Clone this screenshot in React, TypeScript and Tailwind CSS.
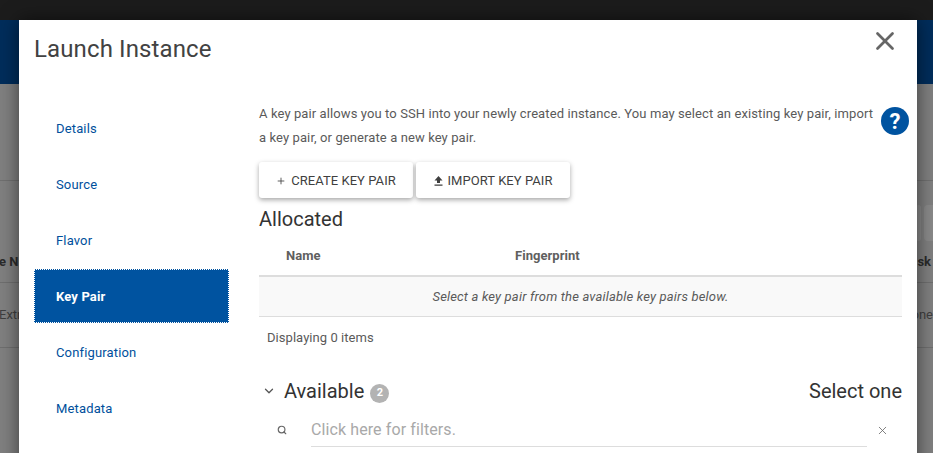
import React from "react";
import { X, Search, ChevronDown, Plus } from "lucide-react";

const nav = ["Details", "Source", "Flavor", "Key Pair", "Configuration", "Metadata"];

export default function App() {
  return (
    <div className="relative h-[453px] w-[933px] overflow-hidden bg-[#808080] text-[13px] font-['Roboto',sans-serif]">
      {/* Page behind the dimmed backdrop */}
      <div className="h-5 bg-[#1c1c1c]" />
      <div className="h-16 bg-[#012d5b]" />
      <div className="flex h-[369px] flex-col">
        <div className="h-[97px] border-b border-[#707070]" />
        <div className="flex h-[60px] justify-end gap-[3px] pt-[24px]">
          <div className="h-[36px] w-[5px] rounded-sm bg-[#8a8a8a]" />
          <div className="h-[36px] w-[9px] rounded-l-sm bg-[#8a8a8a]" />
        </div>
        <div className="flex h-[42px] items-center justify-between border-b border-[#6f6f6f] text-[13px] font-bold text-[#2b2b2b]">
          <span className="-ml-[1px]">e N</span>
          <span className="mr-[2px]">sk</span>
        </div>
        <div className="flex h-[65px] items-center justify-between border-b border-[#6f6f6f] text-[#3f3f3f]">
          <span className="-ml-[1px]">Extr</span>
          <span>one</span>
        </div>
      </div>

      {/* Modal */}
      <div className="absolute left-[19px] right-4 top-5 h-[480px] bg-white shadow-[0_0_18px_rgba(0,0,0,0.55)]">
        <div className="flex h-[82px] items-start justify-between pl-[15px] pr-[17px]">
          <h1 className="mt-[12px] text-[24px] leading-[34px] tracking-[0.12px] text-[#424242]">Launch Instance</h1>
          <X className="mt-[6px] text-[#666666]" size={30} strokeWidth={2.2} />
        </div>
        <div className="flex">
          <ul className="ml-[15px] w-[195px] list-none tracking-[0.15px]">
            {nav.map((n) => (
              <li
                key={n}
                className={
                  n === "Key Pair"
                    ? "-mt-[1px] mb-[3px] flex h-[54px] items-center border border-dotted border-white bg-[#0053a0] pl-[21px] pt-[2px] font-bold text-white"
                    : "mb-[2px] flex h-[54px] items-center pl-[22px] text-[#004f9c]"
                }
              >
                {n}
              </li>
            ))}
          </ul>
          <div className="relative ml-[30px] w-[643px] text-[#5a5a5a]">
            <p className="w-[618px] text-[13px] leading-[24px] tracking-[0.1px]">
              A key pair allows you to SSH into your newly created instance. You may select an existing key pair, import a key pair, or generate a new key pair.
            </p>
            <div className="absolute left-[622px] top-[5px] flex h-7 w-7 items-center justify-center rounded-full bg-[#0053a0] text-[22px] font-bold text-white">
              ?
            </div>
            <div className="mt-[12px] flex gap-[3px] tracking-[0.05px] text-[#3f3f3f]">
              <button className="flex h-[36px] w-[154px] items-center justify-center gap-[5px] rounded-[3px] bg-white pt-[1px] shadow-[0_2px_5px_rgba(0,0,0,0.35)]">
                <Plus size={10} strokeWidth={2} />
                <span>CREATE KEY PAIR</span>
              </button>
              <button className="flex h-[36px] w-[154px] items-center justify-center gap-[5px] rounded-[3px] bg-white pt-[1px] shadow-[0_2px_5px_rgba(0,0,0,0.35)]">
                <svg width="9" height="10" viewBox="0 0 9 10" fill="#3f3f3f">
                  <path d="M4.5 0 8.5 4.5H6V7H3V4.5H.5ZM.5 8.5h8V9.7h-8Z" />
                </svg>
                <span>IMPORT KEY PAIR</span>
              </button>
            </div>
            <h2 className="mt-[9px] text-[20px] leading-[24px] text-[#333333]">Allocated</h2>
            <div className="mt-[7px] flex h-[39px] items-center border-b-2 border-[#dddddd] pb-[2px] font-bold text-[#5f5f5f]">
              <span className="ml-[27px] w-[229px]">Name</span>
              <span className="tracking-[0.05px]">Fingerprint</span>
            </div>
            <div className="flex h-[40px] items-center justify-center border-b border-[#dddddd] bg-[#f9f9f9] italic tracking-[0.17px] text-[#5a5a5a]">
              Select a key pair from the available key pairs below.
            </div>
            <div className="mt-[12px] ml-2 leading-[18px] tracking-[0.05px]">Displaying 0 items</div>
            <div className="mt-[30px] flex h-[28px] items-center justify-between text-[#333333]">
              <div className="flex items-center">
                <ChevronDown size={14} strokeWidth={2.2} className="ml-[3px] mr-[8px] text-[#555555]" />
                <span className="text-[20px] leading-[24px]">Available</span>
                <span className="ml-[6px] mt-[5px] flex h-[19px] w-[19px] items-center justify-center rounded-full bg-[#b3b3b3] text-[11px] font-bold text-white">
                  2
                </span>
              </div>
              <span className="text-[20px] leading-[24px]">Select one</span>
            </div>
            <div className="mt-[11px] flex items-start">
              <Search size={10} strokeWidth={2.8} className="ml-[18px] mt-[9px] mr-[24px] text-[#666666]" />
              <div className="h-[31px] w-[556px] border-b border-[#dddddd] text-[16px] leading-[28px] tracking-[0.1px] text-[#a9a9a9]">
                Click here for filters.
              </div>
              <X size={13} strokeWidth={1.5} className="ml-[9px] mt-[8px] text-[#666666]" />
            </div>
          </div>
        </div>
      </div>
    </div>
  );
}
